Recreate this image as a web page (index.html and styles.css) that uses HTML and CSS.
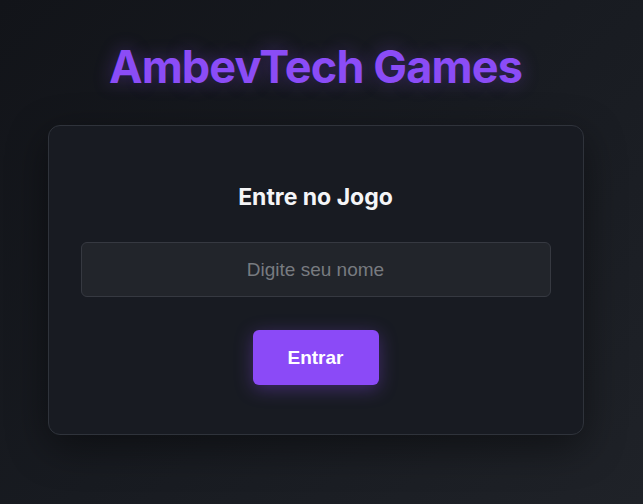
FILE: index.html
```html
<!DOCTYPE html>
<html lang="pt">
<head>
<meta charset="utf-8">
<title>AmbevTech Games</title>
<link rel="stylesheet" href="styles.css">
</head>
<body>
<main class="page">
  <h1 class="brand">AmbevTech Games</h1>
  <section class="card">
    <h2 class="card-title">Entre no Jogo</h2>
    <input class="name-input" type="text" placeholder="Digite seu nome">
    <button class="enter-btn" type="button">Entrar</button>
  </section>
</main>
</body>
</html>
```
FILE: styles.css
```css
html, body {
  margin: 0;
  height: 100%;
}
body {
  background: linear-gradient(135deg, #121419 0%, #181b21 50%, #1f2228 100%);
  font-family: Inter, "Liberation Sans", sans-serif;
  color: #ffffff;
  overflow: hidden;
}
.page {
  display: flex;
  flex-direction: column;
  align-items: center;
  padding: 40px 12px 0 0;
}
.brand {
  margin: 0 0 31px;
  font-size: 45px;
  line-height: 54px;
  font-weight: 700;
  color: #8b4cf6;
  letter-spacing: -0.85px;
  text-shadow: 0 0 18px rgba(139, 76, 246, 0.35);
}
.card {
  box-sizing: border-box;
  width: 536px;
  padding: 57px 32px 49px;
  background: #181b22;
  border: 1px solid #2f333b;
  border-radius: 12px;
  box-shadow: 0 12px 40px rgba(0, 0, 0, 0.45);
  display: flex;
  flex-direction: column;
  align-items: center;
}
.card-title {
  margin: 0 0 31px;
  font-size: 23px;
  line-height: 28px;
  font-weight: 700;
  color: #f4f5f7;
}
.name-input {
  box-sizing: border-box;
  width: 100%;
  height: 55px;
  margin: 0 0 33px;
  padding: 0 16px;
  background: #22252b;
  border: 1px solid #363941;
  border-radius: 6px;
  font-family: "Liberation Sans", Arial, sans-serif;
  font-size: 19px;
  color: #e6e6e6;
  text-align: center;
  outline: none;
}
.name-input::placeholder {
  color: #787b80;
}
.enter-btn {
  box-sizing: border-box;
  width: 126px;
  height: 55px;
  padding: 0;
  background: #8b4af7;
  border: none;
  border-radius: 6px;
  font-family: "Liberation Sans", Arial, sans-serif;
  font-size: 19px;
  font-weight: 700;
  color: #ffffff;
  box-shadow: 0 4px 18px rgba(139, 74, 247, 0.35);
  cursor: pointer;
}
```
